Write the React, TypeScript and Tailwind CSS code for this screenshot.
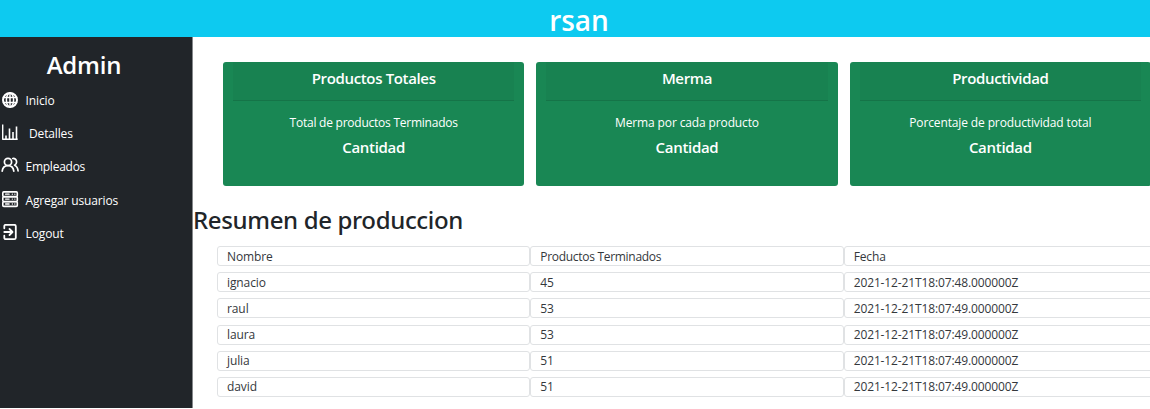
import type { ReactNode } from "react";

const iconProps = {
  width: 18,
  height: 18,
  viewBox: "0 0 18 18",
  fill: "none",
  stroke: "currentColor",
  strokeLinecap: "round" as const,
  strokeLinejoin: "round" as const,
};

const Globe = () => (
  <svg {...iconProps} strokeWidth="1.500">
    <circle cx="9" cy="9" r="7" strokeWidth="2" />
    <ellipse cx="9" cy="9" rx="3.600" ry="7" />
    <path d="M9 2v14M2.500 6.500h13M2.500 11.500h13" />
  </svg>
);

const Chart = () => (
  <svg {...iconProps} strokeWidth="1.400" strokeLinecap="butt">
    <path d="M1.700.5v14.800h15" />
    <path d="M5 15v-3.500M8.500 15V4.500M12 15V8M15.500 15V2.500" strokeWidth="1.600" />
  </svg>
);

const Users = () => (
  <svg {...iconProps} strokeWidth="1.700">
    <circle cx="7" cy="4.900" r="3.600" />
    <path d="M1.200 14.200c.4-3.500 2.500-5.600 5.800-5.600s5.400 2.100 5.800 5.600M11.700 1.500c2.200-.3 3.900 1.200 3.900 3.400 0 1.600-.8 2.700-2 3.300 2.100.9 3.200 2.800 3.500 5.800" />
  </svg>
);

const Server = () => (
  <svg {...iconProps} strokeWidth="1.600">
    <rect x="1.800" y=".9" width="14.500" height="4.700" rx="1" />
    <rect x="1.800" y="5.800" width="14.500" height="4.700" rx="1" />
    <rect x="1.800" y="10.700" width="14.500" height="4.700" rx="1" />
    <path d="M4.600 3.200h3.500M4.600 8.100h3.500M4.600 13h3.500M11.300 3.200h.1M13.800 3.200h.1M11.300 8.100h.1M13.800 8.100h.1M11.300 13h.1M13.800 13h.1" strokeWidth="1.300" />
  </svg>
);

const Logout = () => (
  <svg {...iconProps} strokeWidth="1.800">
    <path d="M3.300 4.300V2.300c0-.9.600-1.500 1.500-1.500h8.500c.9 0 1.500.6 1.500 1.500v11.400c0 .9-.6 1.500-1.500 1.500H4.800c-.9 0-1.500-.6-1.500-1.500v-2" />
    <path d="M3.300 8h8M8.500 5l3 3-3 3" />
  </svg>
);

const links: { icon: ReactNode; label: string; indent: string }[] = [
  { icon: <Globe />, label: "Inicio", indent: "pl-[6.5px] tracking-[-0.1px]" },
  { icon: <Chart />, label: "Detalles", indent: "pl-[10px] tracking-[-0.15px]" },
  { icon: <Users />, label: "Empleados", indent: "pl-[6.5px] tracking-[-0.25px]" },
  { icon: <Server />, label: "Agregar usuarios", indent: "pl-[6.5px] tracking-[-0.15px]" },
  { icon: <Logout />, label: "Logout", indent: "pl-[6.5px] tracking-[-0.1px]" },
];

const cards = [
  { title: "Productos Totales", text: "Total de productos Terminados", tracking: "tracking-[-0.24px]" },
  { title: "Merma", text: "Merma por cada producto", tracking: "tracking-[-0.13px]" },
  { title: "Productividad", text: "Porcentaje de productividad total", tracking: "tracking-[-0.13px]" },
];

const rows = [
  ["Nombre", "Productos Terminados", "Fecha"],
  ["ignacio", "45", "2021-12-21T18:07:48.000000Z"],
  ["raul", "53", "2021-12-21T18:07:49.000000Z"],
  ["laura", "53", "2021-12-21T18:07:49.000000Z"],
  ["julia", "51", "2021-12-21T18:07:49.000000Z"],
  ["david", "51", "2021-12-21T18:07:49.000000Z"],
];

const columnTracking = ["tracking-[-0.1px]", "tracking-[-0.3px]", "tracking-[-0.12px]"];

export default function App() {
  return (
    <div className="flex h-[409px] w-[1150px] flex-col overflow-hidden bg-white font-['Open_Sans','Noto_Sans',sans-serif] text-[12px] text-[#212529]">
      <header className="flex h-[37px] shrink-0 items-center justify-center bg-[#0dcaf0] pt-[3px] pl-[8px] text-[28px] leading-none font-semibold text-white">
        rsan
      </header>
      <div className="flex h-[371px]">
        <aside className="w-[193px] shrink-0 border-r border-[#85888b] bg-[#212529] text-white">
          <h2 className="mt-[12px] pr-[24px] text-center text-[24px] leading-[32px] font-semibold tracking-[-0.2px]">Admin</h2>
          <nav className="mt-[3.500px] flex flex-col">
            {links.map((l) => (
              <a key={l.label} className="flex h-[33.2px] items-center pl-[1px]">
                <span className="-mt-[2px] shrink-0">{l.icon}</span>
                <span className={l.indent}>{l.label}</span>
              </a>
            ))}
          </nav>
        </aside>
        <main className="w-[957px] shrink-0 overflow-hidden">
          <section className="mt-[25px] ml-[30px] grid w-[928px] grid-cols-3 gap-[12px]">
            {cards.map((c) => (
              <article key={c.title} className="h-[123.5px] rounded-[3px] bg-[#198754] px-[10px] text-center text-white">
                <h5 className="h-[39px] border-b border-black/10 bg-black/[0.03] pt-[5px] text-[15px] leading-[22px] font-semibold tracking-[-0.35px]">
                  {c.title}
                </h5>
                <p className={`mt-[12px] leading-[20px] ${c.tracking}`}>{c.text}</p>
                <h5 className="mt-[3px] text-[15px] leading-[22px] font-semibold tracking-[-0.3px]">Cantidad</h5>
              </article>
            ))}
          </section>
          <h2 className="mt-[18.500px] font-['Noto_Sans',sans-serif] text-[24px] leading-[32px] font-medium tracking-[-0.35px]">
            Resumen de produccion
          </h2>
          <div className="mt-[10px] ml-[24px] flex w-[940px] flex-col gap-[6.200px] text-[#34383c]">
            {rows.map((r, i) => (
              <div key={i} className="grid h-[20px] grid-cols-3">
                {r.map((cell, j) => (
                  <div
                    key={j}
                    className={`flex items-center rounded-[3px] border border-[#e0e2e4] px-[9px] pt-[1px] leading-none ${columnTracking[j]}`}
                  >
                    {cell}
                  </div>
                ))}
              </div>
            ))}
          </div>
        </main>
      </div>
    </div>
  );
}
